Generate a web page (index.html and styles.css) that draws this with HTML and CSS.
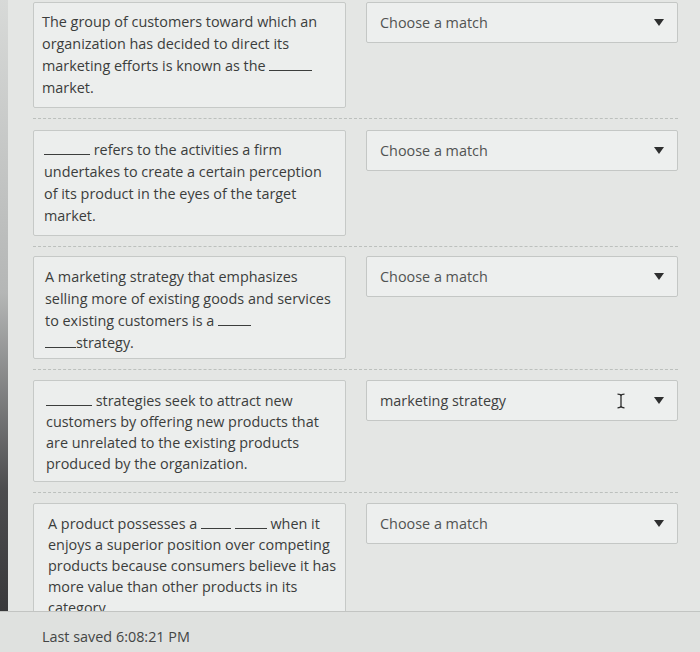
FILE: index.html
```html
<!DOCTYPE html>
<html>
<head>
<meta charset="utf-8">
<link rel="stylesheet" href="styles.css">
</head>
<body>
<div class="page">
  <div class="main">
    <div class="row r1">
      <div class="prompt">The group of customers toward which an organization has decided to direct its marketing efforts is known as the <span class="blank w43"></span> market.</div>
      <div class="select"><span class="val">Choose a match</span><span class="caret"></span></div>
    </div>
    <div class="row r2">
      <div class="prompt"><span class="blank w46"></span> refers to the activities a firm undertakes to create a certain perception of its product in the eyes of the target market.</div>
      <div class="select"><span class="val">Choose a match</span><span class="caret"></span></div>
    </div>
    <div class="row r3">
      <div class="prompt">A marketing strategy that emphasizes selling more of existing goods and services to existing customers is a <span class="blank w33"></span> <span class="nowrap"><span class="blank w31"></span>strategy.</span></div>
      <div class="select"><span class="val">Choose a match</span><span class="caret"></span></div>
    </div>
    <div class="row r4">
      <div class="prompt"><span class="blank w46"></span> strategies seek to attract new customers by offering new products that are unrelated to the existing products produced by the organization.</div>
      <div class="select"><span class="val filled">marketing strategy</span>
        <svg class="ibeam" width="10" height="16" viewBox="0 0 10 16"><path d="M1.5 1.2 Q5 1.2 5 3 Q5 1.2 8.5 1.2 M5 3 V13 M1.5 14.8 Q5 14.8 5 13 Q5 14.8 8.5 14.8" fill="none" stroke="#2c2c2c" stroke-width="1.3"/></svg>
        <span class="caret"></span></div>
    </div>
    <div class="row r5">
      <div class="prompt">A product possesses a <span class="blank w30"></span> <span class="blank w32"></span> when it enjoys a superior position over competing products because consumers believe it has more value than other products in its category.</div>
      <div class="select"><span class="val">Choose a match</span><span class="caret"></span></div>
    </div>
  </div>
  <div class="footer">Last saved 6:08:21 PM</div>
</div>
</body>
</html>
```
FILE: styles.css
```css
html, body {
  margin: 0;
  padding: 0;
}
body {
  width: 700px;
  height: 652px;
  overflow: hidden;
  background-color: #e4e6e4;
  background-image: linear-gradient(to bottom, rgba(70,72,74,0.08) 0%, rgba(70,72,74,0.3) 45%, rgba(60,60,62,0.9) 75%, rgba(50,50,52,1) 100%);
  background-size: 8px 100%;
  background-repeat: no-repeat;
  font-family: "Open Sans", "Noto Sans", sans-serif;
  color: #3b3d3c;
}
.page {
  display: flex;
  flex-direction: column;
  height: 652px;
}
.main {
  height: 611px;
  overflow: hidden;
  padding: 2px 22px 0 33px;
  box-sizing: border-box;
}
.row {
  display: flex;
  gap: 20px;
  align-items: flex-start;
  border-bottom: 1px dashed #bcc0bd;
  padding-bottom: 10px;
  margin-bottom: 10px;
}
.r1 { margin-bottom: 11px; }
.r2 { margin-bottom: 9px; }
.prompt {
  width: 313px;
  box-sizing: border-box;
  height: 106px;
  padding: 8px 10px 0 8px;
  background: #eceeed;
  border: 1px solid #c6c9c7;
  border-radius: 2px;
  font-size: 14.4px;
  line-height: 22px;
}
.r2 .prompt { padding-left: 10px; padding-top: 8px; }
.r3 .prompt { height: 103px; padding-left: 11px; padding-top: 9px; }
.r4 .prompt { height: 102px; padding-left: 12px; padding-top: 9px; line-height: 21px; }
.r5 { border-bottom: none; }
.r5 .prompt { height: 140px; padding-left: 14px; padding-right: 4px; padding-top: 9px; line-height: 21px; }
.nowrap { white-space: nowrap; }
.select {
  width: 312px;
  height: 41px;
  box-sizing: border-box;
  display: flex;
  align-items: center;
  padding: 0 13px 0 13px;
  background: #edefee;
  border: 1px solid #c4c7c5;
  border-radius: 2px;
  font-size: 14.4px;
  color: #515352;
}
.val {
  flex: 1;
}
.val.filled { color: #3e403f; }
.caret {
  width: 0;
  height: 0;
  border-left: 5px solid transparent;
  border-right: 5px solid transparent;
  border-top: 7px solid #2e2f2f;
}
.ibeam {
  margin-right: 28px;
}
.blank {
  display: inline-block;
  border-bottom: 1px solid #3b3d3c;
  height: 12px;
  vertical-align: baseline;
}
.w43 { width: 43px; }
.w46 { width: 46px; }
.w33 { width: 33px; }
.w31 { width: 31px; }
.w30 { width: 30px; }
.w32 { width: 32px; }
.footer {
  flex: 1;
  border-top: 1px solid #c2c4c2;
  background: #dfe1df;
  padding: 15px 0 0 42px;
  font-size: 14.4px;
  line-height: 20px;
  color: #444645;
}
```
